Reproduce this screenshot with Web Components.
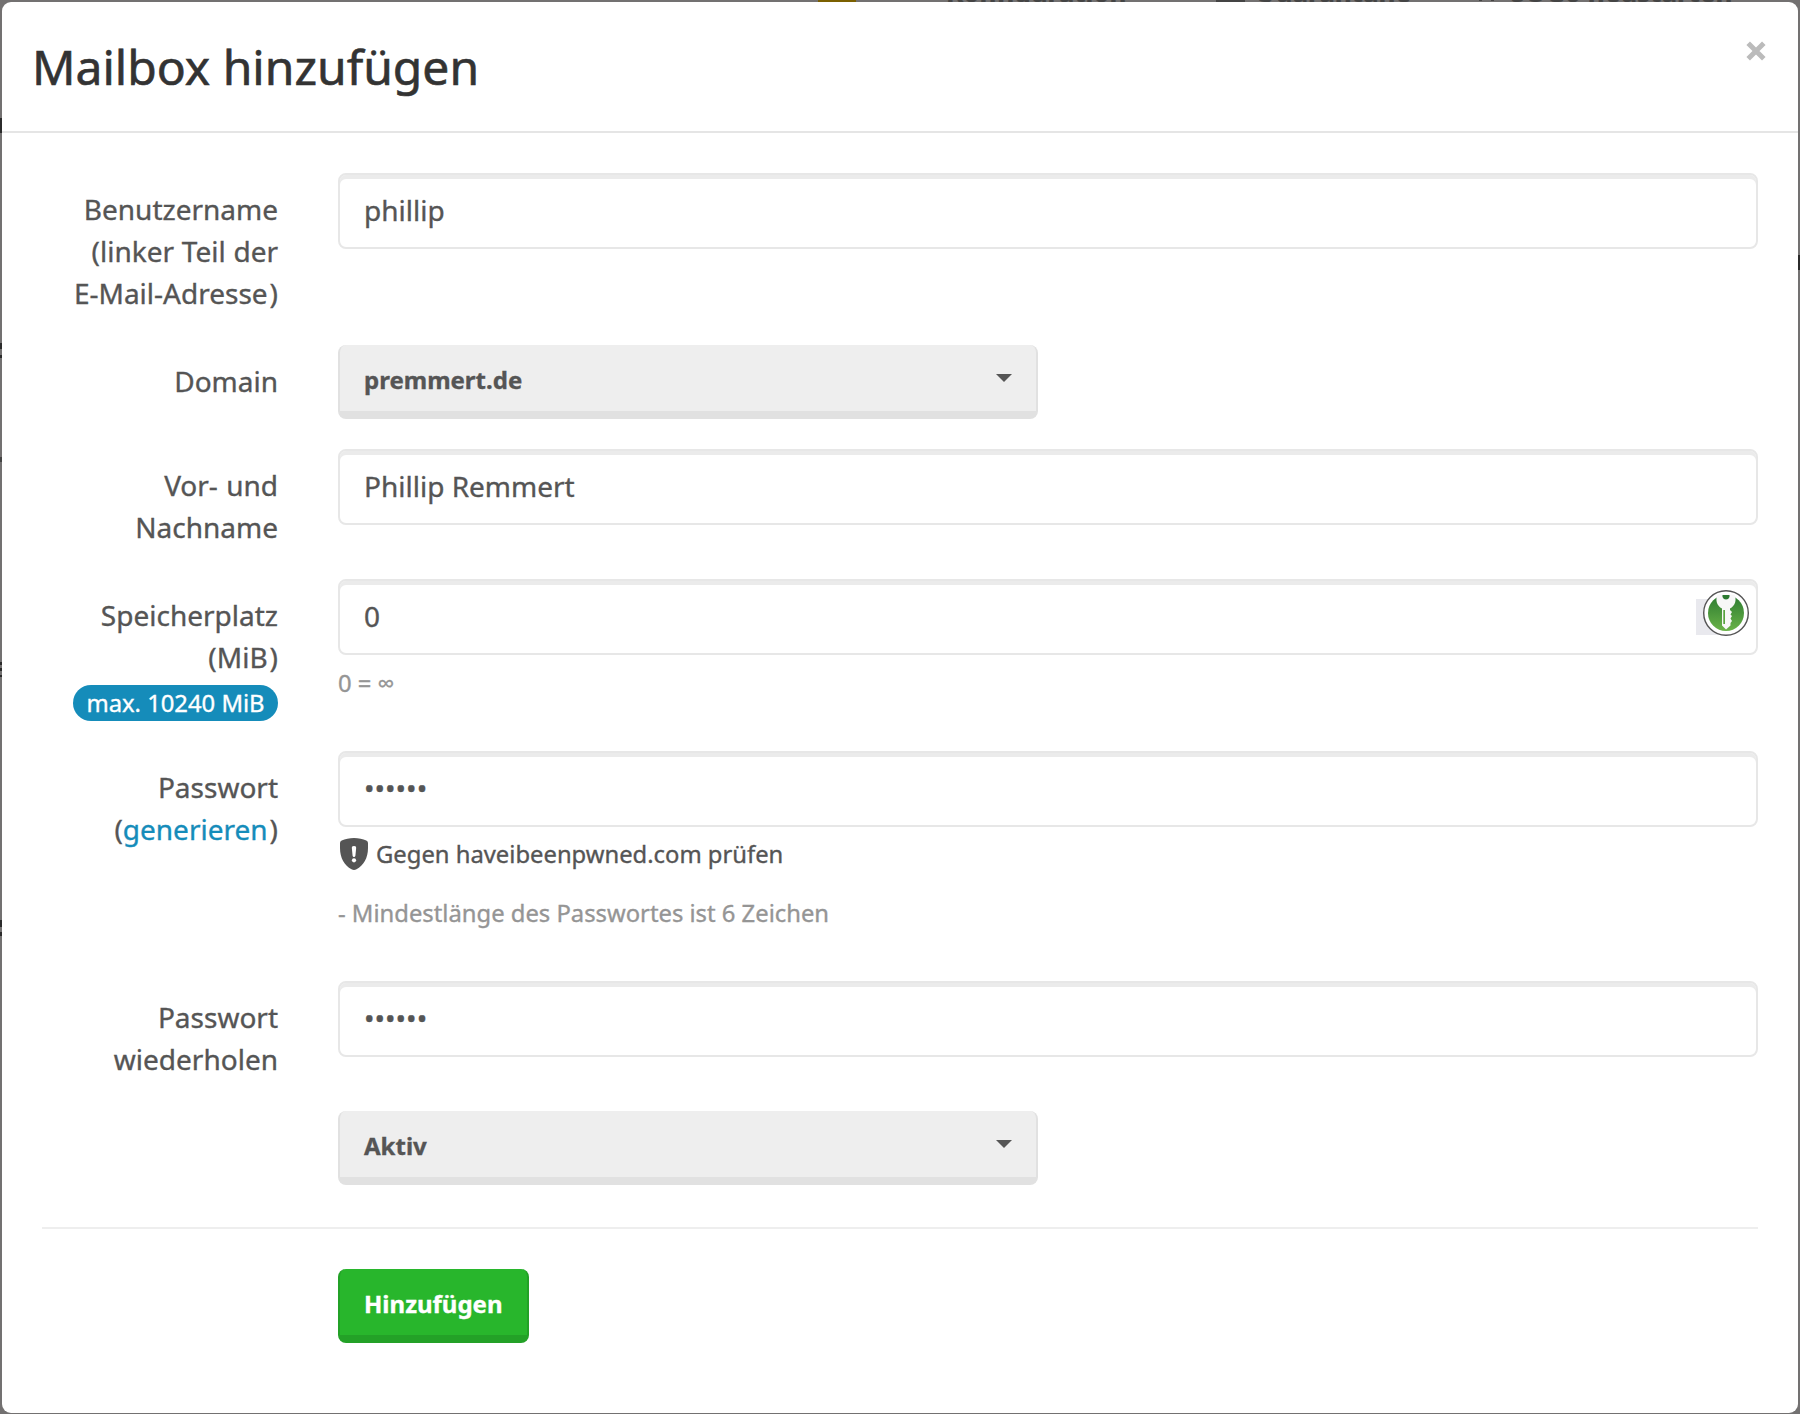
<!DOCTYPE html>
<html lang="de">
<head>
<meta charset="utf-8">
<title>Mailbox hinzufügen</title>
<style>
html,body{margin:0;height:100%;background:#707070;overflow:hidden}
body{font-family:"Noto Sans","Open Sans",sans-serif;font-size:28px;line-height:42px;color:#555;-webkit-text-stroke:.35px}
.e{margin-left:2px}
</style>
</head>
<body>
<mailbox-page>
  <mailbox-modal heading="Mailbox hinzufügen">
    <form-row><span slot="label" style="word-spacing:.5px">Benutzername<br>(linker Teil der<br>E-Mail-Adresse<span class="e">)</span></span><text-field>phillip</text-field></form-row>
    <form-row><span slot="label">Domain</span><select-button>premmert.de</select-button></form-row>
    <form-row><span slot="label" style="word-spacing:1px">Vor- und Nachname</span><text-field>Phillip Remmert</text-field></form-row>
    <form-row><span slot="label">Speicherplatz<br>(MiB<span class="e">)</span><br><pill-badge>max. 10240 MiB</pill-badge></span><text-field>0<key-icon slot="addon"></key-icon></text-field><help-text style="margin-top:9px">0 = ∞</help-text></form-row>
    <form-row style="height:200px"><span slot="label">Passwort<br>(<action-link>generieren</action-link><span class="e">)</span></span><text-field>••••••</text-field><pwned-check>Gegen haveibeenpwned.com prüfen</pwned-check><help-text style="margin-top:21px">- Mindestlänge des Passwortes ist 6 Zeichen</help-text></form-row>
    <form-row><span slot="label">Passwort wiederholen</span><text-field>••••••</text-field></form-row>
    <form-row><select-button>Aktiv</select-button></form-row>
    <form-divider></form-divider>
    <form-row><submit-button>Hinzufügen</submit-button></form-row>
  </mailbox-modal>
</mailbox-page>
<script>
const define = (name, html) => {
  const t = document.createElement('template');
  t.innerHTML = html;
  customElements.define(name, class extends HTMLElement {
    constructor() {
      super();
      this.attachShadow({mode: 'open'}).append(t.content.cloneNode(true));
    }
    connectedCallback() {
      const h = this.shadowRoot.querySelector('[data-heading]');
      if (h) h.textContent = this.getAttribute('heading');
    }
  });
};

define('mailbox-page', `<style>
:host{display:block;box-sizing:border-box;width:1800px;height:1414px;padding:2px 2px 1px;position:relative;overflow:hidden;background:#737171}
.m{position:absolute;background:#2b2b2b}
.t{position:absolute;top:-25px;font-size:26px;line-height:35px;font-weight:700;color:#444;white-space:nowrap}
</style>
<i class="m" style="left:818px;top:0;width:38px;height:2px;background:#7b6000"></i>
<span class="t" style="left:946px">Konfiguration</span>
<i class="m" style="left:1216px;top:0;width:29px;height:2px;background:#444"></i>
<span class="t" style="left:1255px">Quarantäne</span>
<i class="m" style="left:1479px;top:0;width:3px;height:1px;background:#444"></i>
<i class="m" style="left:1491px;top:0;width:3px;height:1px;background:#444"></i>
<span class="t" style="left:1511px">SOGo neustarten</span>
<i class="m" style="left:0;top:118px;width:2px;height:15px"></i>
<i class="m" style="left:0;top:343px;width:2px;height:6px"></i>
<i class="m" style="left:0;top:355px;width:2px;height:3px"></i>
<i class="m" style="left:0;top:457px;width:2px;height:5px;background:#444"></i>
<i class="m" style="left:0;top:662px;width:2px;height:3px"></i>
<i class="m" style="left:0;top:668px;width:2px;height:3px"></i>
<i class="m" style="left:0;top:675px;width:2px;height:2px"></i>
<i class="m" style="left:0;top:920px;width:2px;height:7px"></i>
<i class="m" style="left:0;top:932px;width:2px;height:4px"></i>
<i class="m" style="left:1798px;top:255px;width:2px;height:15px"></i>
<slot></slot>`);

define('mailbox-modal', `<style>
:host{display:flex;flex-direction:column;position:relative;box-sizing:border-box;height:1411px;background:#fff;border-radius:9px}
header{display:flex;justify-content:space-between;box-sizing:border-box;height:131px;padding:30px 32px 0 30px;border-bottom:2px solid #e5e5e5}
h4{margin:0;font-weight:400;font-size:48px;line-height:70px;color:#333;-webkit-text-stroke:.6px}
svg{margin-top:9px;width:20px;height:20px}
main{padding:40px 40px 0}
</style>
<header><h4 data-heading></h4><svg viewBox="0 0 20 20"><path d="M2.200 2.200 17.800 17.800M17.800 2.200 2.200 17.800" stroke="#bbb" stroke-width="5"/></svg></header>
<main><slot></slot></main>`);

define('form-row', `<style>
:host{display:flex;gap:60px;margin-bottom:30px}
.l{width:236px;box-sizing:border-box;padding:15px 0 1px 20px;text-align:right;flex:none}
.c{flex:1;min-width:0}
</style><div class="l"><slot name="label"></slot></div><div class="c"><slot></slot></div>`);

define('text-field', `<style>
:host{display:flex;justify-content:space-between;box-sizing:border-box;height:76px;padding:14px 6px 0 24px;border:2px solid #e7e7e7;border-radius:8px;background:#fff;box-shadow:inset 0 4px 0 #ebebeb}
</style><span><slot></slot></span><slot name="addon"></slot>`);

define('select-button', `<style>
:host{display:flex;justify-content:space-between;box-sizing:border-box;width:700px;height:74px;padding:14px 24px 0;border:solid #e1e1e1;border-width:0 2px 8px;border-radius:8px;background:#eee;font-weight:700;font-size:24px}
i{margin-top:15px;width:0;height:0;border:8px solid transparent;border-top-color:#555;border-bottom:0}
</style><span><slot></slot></span><i></i>`);

define('submit-button', `<style>
:host{display:block;box-sizing:border-box;width:191px;height:74px;padding:14px 24px 0;border:solid #23a127;border-width:0 2px 8px;border-radius:8px;background:#28b62c;color:#fff;font-weight:700;font-size:24px;white-space:nowrap}
</style><slot></slot>`);

define('pill-badge', `<style>
:host{display:inline-block;vertical-align:top;box-sizing:border-box;width:205px;text-align:center;margin:7px 0 -1px;height:36px;line-height:36px;border-radius:18px;background:#158cba;color:#fff;font-size:23.8px;white-space:nowrap}
</style><slot></slot>`);

define('action-link', `<style>:host{color:#158cba}</style><slot></slot>`);
define('help-text', `<style>:host{display:block;font-size:23.8px;line-height:38px;color:#959595}</style><slot></slot>`);
define('form-divider', `<style>:host{display:block;height:2px;margin:42px 0 40px;background:#eee}</style>`);

define('pwned-check', `<style>
:host{display:flex;gap:8px;margin-top:8px;font-size:23.8px;line-height:38px}
svg{width:28px;height:32px;margin:3px 0 0 2px;flex:none}
</style><svg viewBox="0 0 28 32"><path d="M14 0C9.500 0 5 1.200 1.700 2.400Q0 3 0 5V10C0 20 4.500 27.500 11.500 31.300Q14 32.600 16.500 31.300C23.500 27.500 28 20 28 10V5Q28 3 26.300 2.400C23 1.200 18.500 0 14 0Z" fill="#555"/><path d="M14 8C11.800 8 11.700 9.300 11.900 10.800L12.600 17.700Q12.800 19 14 19T15.400 17.700L16.100 10.800C16.300 9.300 16.200 8 14 8Z" fill="#fff"/><circle cx="14" cy="22.300" r="2.100" fill="#fff"/></svg><span><slot></slot></span>`);

define('key-icon', `<style>
:host{display:block;width:54px;height:46px;margin-top:-5px}
svg{display:block}
</style><svg width="54" height="46" viewBox="0 0 54 46"><defs><linearGradient id="g" x2="0" y2="1"><stop stop-color="#2b7a30"/><stop offset="1" stop-color="#6ab348"/></linearGradient></defs><path d="M0 9H36V45H0Z" fill="#e9e9ee"/><circle cx="30" cy="23" r="22.300" fill="#fff" stroke="#555" stroke-width="1.400"/><circle cx="30" cy="23" r="18" fill="url(#g)"/><path d="M21.500 4.500H38.500C41 10 39 16 34 18.500V20L36 22 34.500 24.500 36 26 34.500 28.500 36 31 34.500 33V35.500L30 39.500 26 35.500V18.500C21 16 19 10 21.500 4.500Z" fill="#f7f7f7"/><path d="M26.500 5H33.500V7Q32.500 9.500 30 9.500T26.500 7Z" fill="#2b7a30"/><path d="M27.300 20H29V34H27.300Z" fill="#57a33f"/></svg>`);
</script>
</body>
</html>
